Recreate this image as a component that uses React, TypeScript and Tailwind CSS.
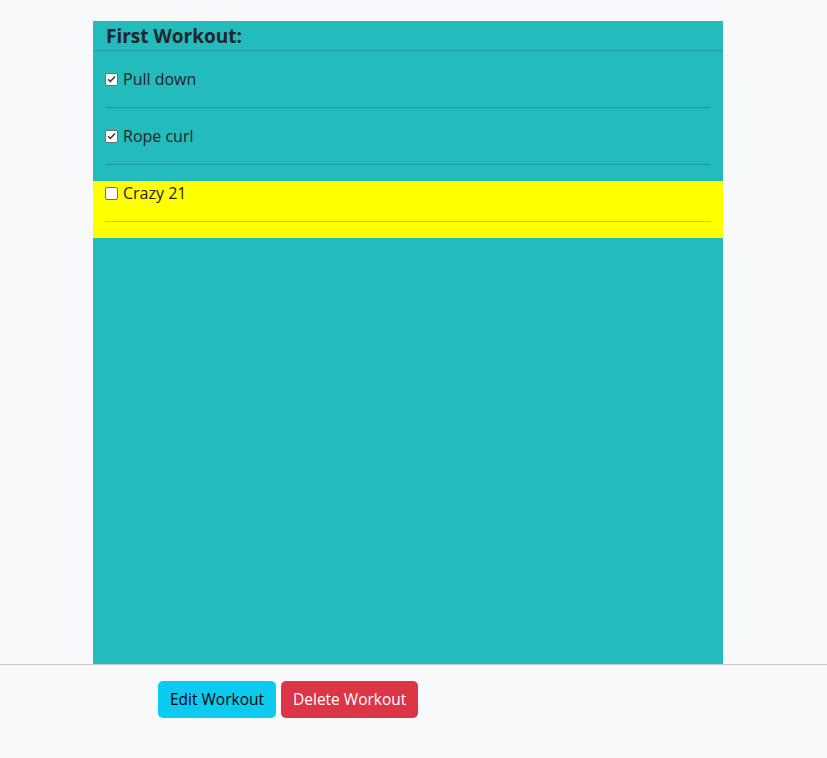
const exercises = [
  { name: "Pull down", done: true },
  { name: "Rope curl", done: true },
  { name: "Crazy 21", done: false, current: true },
];

function Box({ checked }: { checked: boolean }) {
  return (
    <span className="w-[13px] h-[13px] border border-[#6f6f6f] rounded-[2px] bg-white flex items-center justify-center shrink-0">
      {checked && (
        <svg width="9" height="8" viewBox="0 0 9 8" fill="none">
          <path d="M1 4.2 L3.3 6.4 L8 1.4" stroke="#333" strokeWidth="1.4" />
        </svg>
      )}
    </span>
  );
}

export default function App() {
  return (
    <div
      className="min-h-[758px] bg-[#f8f9fa] text-[#212529] text-base"
      style={{ fontFamily: '"Open Sans", "Noto Sans", sans-serif' }}
    >
      <div className="pt-[21px]">
        <div className="ml-[93px] w-[630px] h-[643px] bg-[#23bbbb]">
          <h5 className="h-[30px] pl-[13px] pt-[2px] border-b border-[#1f9c9c] text-[19px] font-bold leading-[26px]">
            First Workout:
          </h5>
          <div className="pt-4">
            {exercises.map((ex) => (
              <div
                key={ex.name}
                className={`px-3 pb-4 ${ex.current ? "bg-[#ffff00]" : ""}`}
              >
                <label className="flex items-center h-6 gap-[5px]">
                  <Box checked={ex.done} />
                  <span>{ex.name}</span>
                </label>
                <div
                  className={`mt-4 h-px ${
                    ex.current ? "bg-[#c9c900]" : "bg-[#1f9c9c]"
                  }`}
                />
              </div>
            ))}
          </div>
        </div>
      </div>
      <div className="border-t border-[#c8c9ca] pt-4 pl-[158px] flex gap-[5px]">
        <button className="h-[37px] px-3 rounded-[5px] bg-[#0dcaf0] text-black text-[15.5px]">
          Edit Workout
        </button>
        <button className="h-[37px] px-3 rounded-[5px] bg-[#dc3545] text-white text-[15.5px]">
          Delete Workout
        </button>
      </div>
    </div>
  );
}
